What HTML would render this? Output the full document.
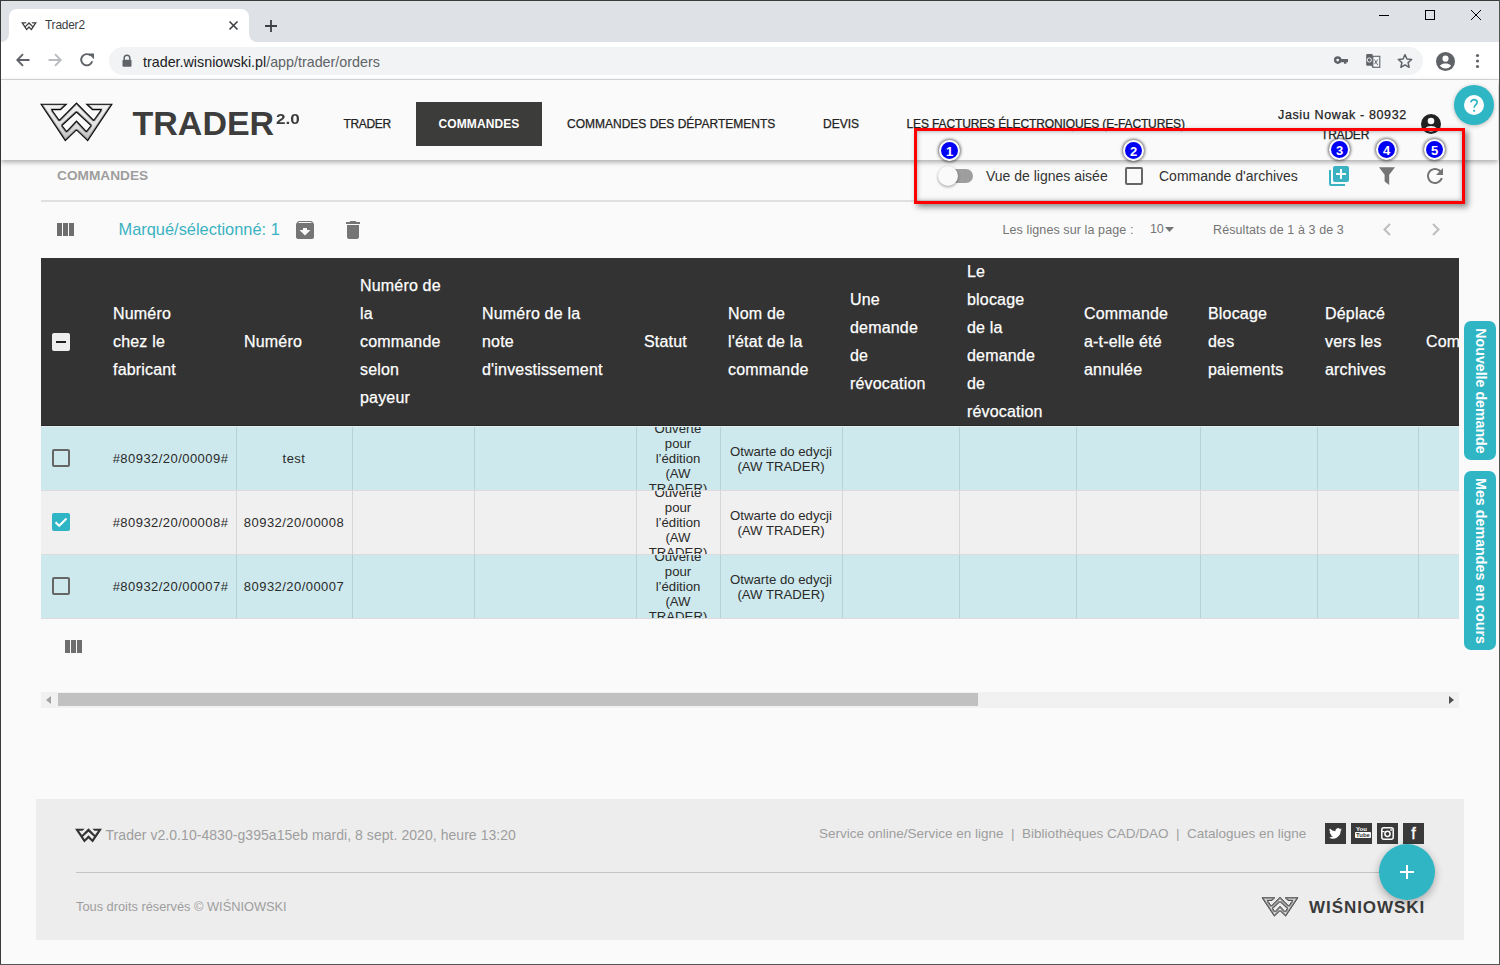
<!DOCTYPE html>
<html><head><meta charset="utf-8">
<style>
*{box-sizing:border-box}
html,body{margin:0;padding:0}
body{width:1500px;height:965px;position:relative;overflow:hidden;background:#fafafa;font-family:"Liberation Sans",sans-serif;color:#333}
.a{position:absolute;white-space:nowrap;line-height:1}
svg{position:absolute;overflow:visible}
.th{position:absolute;top:0;height:168px;display:flex;align-items:center;padding-left:8px;font-size:16px;line-height:28px;color:#fff;white-space:nowrap;letter-spacing:0.18px;-webkit-text-stroke:0.25px #fff}
.td{position:absolute;height:64px;display:flex;align-items:center;justify-content:center;text-align:center;font-size:13px;line-height:15px;color:#2a2a2a;overflow:hidden;white-space:nowrap;padding-top:1.5px;letter-spacing:0.45px}
</style></head><body>

<!-- ============ BROWSER CHROME ============ -->
<div class="a" style="left:0;top:0;width:1500px;height:42px;background:#dee1e6"></div>
<!-- active tab -->
<div class="a" style="left:9px;top:9px;width:240px;height:34px;background:#fff;border-radius:8px 8px 0 0"></div>
<svg style="left:1px;top:34px" width="8" height="8"><path d="M8 0 V8 H0 A8 8 0 0 0 8 0Z" fill="#fff"/></svg>
<svg style="left:249px;top:34px" width="8" height="8"><path d="M0 0 V8 H8 A8 8 0 0 1 0 0Z" fill="#fff"/></svg>
<!-- favicon -->
<svg style="left:21px;top:22px" width="16" height="8.5" viewBox="3 3 71 38"><path fill-rule="evenodd" fill="#3c3c3c" d="M3.1 4.2H28.3L22.6 9.6H13.5L21.3 20.5L38.5 3.1L55.7 20.5L63.5 9.6H54.4L48.7 4.2H73.9L49.7 40.6L38.5 29.9L27.3 40.6Z M23.9 25.5L38.5 12L53.1 25.5L48.4 31.7L38.5 21.1L28.6 31.7Z"/></svg>
<div id="tabt" class="a" style="left:45px;top:19.5px;font-size:11.9px;letter-spacing:-0.2px;color:#3c4043">Trader2</div>
<!-- tab close -->
<svg style="left:229px;top:21px" width="9" height="9"><path d="M0.5 0.5L8.5 8.5M8.5 0.5L0.5 8.5" stroke="#3c4043" stroke-width="1.6"/></svg>
<!-- new tab + -->
<svg style="left:265px;top:20px" width="12" height="12"><path d="M6 0V12M0 6H12" stroke="#3c4043" stroke-width="1.8"/></svg>
<!-- window controls -->
<div class="a" style="left:1379px;top:15px;width:10px;height:1px;background:#000"></div>
<div class="a" style="left:1425px;top:10px;width:10px;height:10px;border:1px solid #000"></div>
<svg style="left:1471px;top:10px" width="10" height="10"><path d="M0 0L10 10M10 0L0 10" stroke="#000" stroke-width="1"/></svg>

<!-- toolbar -->
<div class="a" style="left:0;top:42px;width:1500px;height:37px;background:#fff"></div>
<div class="a" style="left:0;top:79px;width:1500px;height:1px;background:#dadce0"></div>
<!-- nav icons -->
<svg style="left:16px;top:53px" width="14" height="14"><path d="M13.5 7H1.5M7 1.2L1.3 7L7 12.8" stroke="#5f6368" stroke-width="1.9" fill="none"/></svg>
<svg style="left:48px;top:53px" width="14" height="14"><path d="M0.5 7H12.5M7 1.2L12.7 7L7 12.8" stroke="#b9bbbe" stroke-width="1.9" fill="none"/></svg>
<svg style="left:80px;top:53px" width="14" height="14"><path d="M12.2 8.2A5.6 5.6 0 1 1 10.6 2.6" stroke="#5f6368" stroke-width="1.9" fill="none"/><path d="M8.3 0.6H14V6.3Z" fill="#5f6368"/></svg>
<!-- address pill -->
<div class="a" style="left:109px;top:47px;width:1314px;height:28px;background:#f1f3f4;border-radius:14px"></div>
<svg style="left:122px;top:54px" width="10" height="13"><path d="M2.2 6V4A2.8 2.8 0 0 1 7.8 4V6" stroke="#5f6368" stroke-width="1.5" fill="none"/><rect x="0.5" y="5.8" width="9" height="7" rx="1" fill="#5f6368"/></svg>
<div id="url" class="a" style="left:143px;top:55px;font-size:14.3px;color:#202124">trader.wisniowski.pl<span style="color:#5f6368">/app/trader/orders</span></div>
<!-- right omnibox icons -->
<svg style="left:1334px;top:56px" width="15" height="9"><circle cx="3.7" cy="4.1" r="2.6" fill="none" stroke="#5f6368" stroke-width="2.4"/><path d="M6 3H14V6.2H12.4V7.8H10V6.2H6Z" fill="#5f6368"/></svg>
<svg style="left:1366px;top:54px" width="15" height="14"><rect x="0.2" y="0" width="6.5" height="11.8" rx="1" fill="#5f6368"/><rect x="6.8" y="2.3" width="7" height="11" fill="none" stroke="#5f6368" stroke-width="1.1"/><path d="M6.8 11.5L5.2 11.8L6.8 13.6Z" fill="#5f6368"/><circle cx="3.3" cy="6" r="2.1" fill="none" stroke="#fff" stroke-width="0.9"/><path d="M8.2 5.5L11.8 11M11.8 5.5L8.6 10" stroke="#5f6368" stroke-width="0.9"/></svg>
<svg style="left:1397px;top:53px" width="16" height="16" viewBox="0 0 24 24"><path d="M12 2.5l2.9 6.6 7.1.6-5.4 4.7 1.6 7-6.2-3.7-6.2 3.7 1.6-7L2 9.7l7.1-.6z" fill="none" stroke="#5f6368" stroke-width="2.2" stroke-linejoin="round"/></svg>
<svg style="left:1436px;top:52px" width="19" height="19" viewBox="0 0 20 20"><circle cx="10" cy="10" r="10" fill="#5f6368"/><circle cx="10" cy="7" r="3.2" fill="#fff"/><path d="M4 14.6C5.5 12.6 8 12 10 12S14.5 12.6 16 14.6A7.8 7.8 0 0 1 4 14.6Z" fill="#fff"/></svg>
<svg style="left:1475px;top:53px" width="5" height="16"><circle cx="2.5" cy="2.5" r="1.6" fill="#5f6368"/><circle cx="2.5" cy="8" r="1.6" fill="#5f6368"/><circle cx="2.5" cy="13.5" r="1.6" fill="#5f6368"/></svg>


<!-- ============ APP HEADER ============ -->
<div class="a" style="left:1px;top:80px;width:1497px;height:80px;background:#fafafa;box-shadow:0 2px 5px rgba(0,0,0,.33);z-index:1"></div>
<div style="position:absolute;left:0;top:0;z-index:2">
<svg style="left:38px;top:100px" width="78" height="44" viewBox="0 0 78 44"><defs><filter id="er" x="-10%" y="-10%" width="120%" height="120%"><feMorphology operator="erode" radius="1.1"/><feGaussianBlur stdDeviation="0.7"/></filter><linearGradient id="mg" x1="0" y1="0" x2="0" y2="1"><stop offset="0" stop-color="#f6f6f6"/><stop offset=".6" stop-color="#e2e2e2"/><stop offset="1" stop-color="#bdbdbd"/></linearGradient></defs><path fill-rule="evenodd" fill="#8a8a8a" stroke="#0a0a0a" stroke-width="1.1" d="M3.1 4.2H28.3L22.6 9.6H13.5L21.3 20.5L38.5 3.1L55.7 20.5L63.5 9.6H54.4L48.7 4.2H73.9L49.7 40.6L38.5 29.9L27.3 40.6Z M23.9 25.5L38.5 12L53.1 25.5L48.4 31.7L38.5 21.1L28.6 31.7Z"/><path fill-rule="evenodd" fill="url(#mg)" filter="url(#er)" d="M3.1 4.2H28.3L22.6 9.6H13.5L21.3 20.5L38.5 3.1L55.7 20.5L63.5 9.6H54.4L48.7 4.2H73.9L49.7 40.6L38.5 29.9L27.3 40.6Z M23.9 25.5L38.5 12L53.1 25.5L48.4 31.7L38.5 21.1L28.6 31.7Z"/></svg>
<div id="logot" class="a" style="left:132.5px;top:105.5px;font-size:34px;font-weight:bold;color:#3d3d3d">TRADER</div>
<div id="logo2" class="a" style="left:276px;top:111.5px;font-size:14px;font-weight:bold;color:#3d3d3d;transform:scaleX(1.22);transform-origin:0 0">2.0</div>
<div id="nav1" class="a" style="-webkit-text-stroke:0.25px #222;left:343.5px;top:118px;font-size:12px;color:#222;letter-spacing:-0.35px">TRADER</div>
<div class="a" style="left:416px;top:102px;width:126px;height:44px;background:#3c3c3a"></div>
<div id="nav2" class="a" style="left:438.5px;top:118px;font-size:12px;color:#fff;font-weight:bold;letter-spacing:0.1px">COMMANDES</div>
<div id="nav3" class="a" style="-webkit-text-stroke:0.25px #222;left:567px;top:118px;font-size:12px;color:#222;letter-spacing:0px">COMMANDES DES DÉPARTEMENTS</div>
<div id="nav4" class="a" style="-webkit-text-stroke:0.25px #222;left:823px;top:118px;font-size:12px;color:#222;letter-spacing:0px">DEVIS</div>
<div id="nav5" class="a" style="-webkit-text-stroke:0.25px #222;left:906.5px;top:118px;font-size:12px;color:#222;letter-spacing:-0.13px">LES FACTURES ÉLECTRONIQUES (E-FACTURES)</div>
<div id="user1" class="a" style="-webkit-text-stroke:0.25px #222;left:1278px;top:109px;font-size:12.5px;color:#222;letter-spacing:0.64px">Jasiu Nowak - 80932</div>
<div id="user2" class="a" style="-webkit-text-stroke:0.25px #222;left:1321px;top:128.5px;font-size:12px;color:#222;letter-spacing:-0.2px">TRADER</div>
<svg style="left:1421px;top:114px" width="20" height="20" viewBox="0 0 20 20"><circle cx="10" cy="10" r="10" fill="#222"/><circle cx="10" cy="7" r="3.3" fill="#fafafa"/><path d="M3.8 14.8C5.3 12.7 7.8 12.1 10 12.1S14.7 12.7 16.2 14.8A8 8 0 0 1 3.8 14.8Z" fill="#fafafa"/></svg>
<div class="a" style="left:1454px;top:85px;width:40px;height:40px;border-radius:50%;background:#2eb6c5;box-shadow:0 1px 4px rgba(0,0,0,.25)"></div>
<div class="a" style="left:1464px;top:95px;width:20px;height:20px;border-radius:50%;background:#fff"></div>
<svg style="left:1464px;top:95px" width="20" height="20" viewBox="0 0 20 20"><path d="M6.9 7.3A3.2 3.2 0 0 1 13.2 7.2C13.2 9.4 10.2 9.8 10.2 12.8" stroke="#2eb6c5" stroke-width="1.7" fill="none"/><rect x="9.2" y="14.8" width="1.9" height="1.9" fill="#2eb6c5"/></svg>
</div>

<!-- ============ SUB HEADER ============ -->
<div id="subh" class="a" style="left:57px;top:169px;font-size:13.7px;font-weight:bold;color:#9e9e9e;letter-spacing:0px">COMMANDES</div>
<div class="a" style="left:41px;top:200px;width:1418px;height:2px;background:#e0e0e0"></div>
<!-- toggle -->
<div class="a" style="left:943px;top:169px;width:30px;height:14px;border-radius:7px;background:#9e9e9e"></div>
<div class="a" style="left:938px;top:166px;width:20px;height:20px;border-radius:50%;background:#fafafa;box-shadow:0 1px 3px rgba(0,0,0,.4)"></div>
<div id="vue" class="a" style="left:986px;top:169px;font-size:14px;color:#333">Vue de lignes aisée</div>
<div class="a" style="left:1125px;top:167px;width:18px;height:18px;border:2px solid #666;border-radius:2px"></div>
<div id="arch" class="a" style="left:1159px;top:169px;font-size:14px;color:#333">Commande d'archives</div>


<!-- toolbar icons -->
<svg style="left:1327px;top:164px" width="24" height="24" viewBox="0 0 24 24"><path fill="#3ab2c2" d="M4 6H2v14c0 1.1.9 2 2 2h14v-2H4V6zm16-4H8c-1.1 0-2 .9-2 2v12c0 1.1.9 2 2 2h12c1.1 0 2-.9 2-2V4c0-1.1-.9-2-2-2zm-1 9h-4v4h-2v-4H9V9h4V5h2v4h4v2z"/></svg>
<svg style="left:1379px;top:167px" width="16" height="18" viewBox="0 0 16 18"><path fill="#757575" d="M0 0.2H16L10.2 7.8V18L5.6 14.5V7.8Z"/></svg>
<svg style="left:1423px;top:164px" width="24" height="24" viewBox="0 0 24 24"><path fill="#757575" d="M17.65 6.35C16.2 4.9 14.21 4 12 4c-4.42 0-7.99 3.58-7.99 8s3.57 8 7.99 8c3.73 0 6.84-2.55 7.73-6h-2.08c-.82 2.33-3.04 4-5.650 4-3.31 0-6-2.690-6-6s2.69-6 6-6c1.66 0 3.14.69 4.22 1.78L13 11h7V4l-2.35 2.35z"/></svg>

<!-- ============ ANNOTATIONS ============ -->
<div class="a" style="left:914px;top:127.5px;width:551px;height:76px;border:3px solid #f00;box-shadow:3px 3px 6px rgba(0,0,0,.45), inset 0 0 5px rgba(0,0,0,.35);z-index:5"></div>
<div class="a" style="left:939.0px;top:139.5px;width:21px;height:21px;border-radius:50%;background:#0000f5;border:2.2px solid #fff;box-shadow:0 0 3px 1px rgba(0,0,0,.55);z-index:6"></div>
<div class="a" style="left:939.0px;top:144.5px;width:21px;text-align:center;font-weight:bold;font-size:13px;color:#fff;z-index:7">1</div>
<div class="a" style="left:1123.0px;top:139.5px;width:21px;height:21px;border-radius:50%;background:#0000f5;border:2.2px solid #fff;box-shadow:0 0 3px 1px rgba(0,0,0,.55);z-index:6"></div>
<div class="a" style="left:1123.0px;top:144.5px;width:21px;text-align:center;font-weight:bold;font-size:13px;color:#fff;z-index:7">2</div>
<div class="a" style="left:1329.0px;top:138.5px;width:21px;height:21px;border-radius:50%;background:#0000f5;border:2.2px solid #fff;box-shadow:0 0 3px 1px rgba(0,0,0,.55);z-index:6"></div>
<div class="a" style="left:1329.0px;top:143.5px;width:21px;text-align:center;font-weight:bold;font-size:13px;color:#fff;z-index:7">3</div>
<div class="a" style="left:1376.0px;top:138.5px;width:21px;height:21px;border-radius:50%;background:#0000f5;border:2.2px solid #fff;box-shadow:0 0 3px 1px rgba(0,0,0,.55);z-index:6"></div>
<div class="a" style="left:1376.0px;top:143.5px;width:21px;text-align:center;font-weight:bold;font-size:13px;color:#fff;z-index:7">4</div>
<div class="a" style="left:1424.0px;top:138.5px;width:21px;height:21px;border-radius:50%;background:#0000f5;border:2.2px solid #fff;box-shadow:0 0 3px 1px rgba(0,0,0,.55);z-index:6"></div>
<div class="a" style="left:1424.0px;top:143.5px;width:21px;text-align:center;font-weight:bold;font-size:13px;color:#fff;z-index:7">5</div>

<!-- ============ SELECTION BAR ============ -->
<svg style="left:53px;top:218px" width="24" height="24" viewBox="0 0 24 24"><path fill="#6e6e6e" d="M10 18h5V5h-5v13zm-6 0h5V5H4v13zM16 5v13h5V5h-5z"/></svg>
<div id="marq" class="a" style="left:118.5px;top:221px;font-size:16.4px;color:#3ab2c2">Marqué/sélectionné: 1</div>
<svg style="left:293px;top:218px" width="24" height="24" viewBox="0 0 24 24"><path fill="#757575" d="M20.54 5.23l-1.39-1.68C18.88 3.21 18.47 3 18 3H6c-.47 0-.88.21-1.16.55L3.460 5.23C3.17 5.57 3 6.02 3 6.5V19c0 1.1.9 2 2 2h14c1.1 0 2-.9 2-2V6.5c0-.48-.17-.93-.46-1.27zM12 17.5L6.5 12H10v-2h4v2h3.5L12 17.5zM5.12 5l.81-1h12l.94 1H5.12z"/></svg>
<svg style="left:341px;top:218px" width="24" height="24" viewBox="0 0 24 24"><path fill="#757575" d="M6 19c0 1.1.9 2 2 2h8c1.1 0 2-.9 2-2V7H6v12zM19 4h-3.5l-1-1h-5l-1 1H5v2h14V4z"/></svg>
<div id="lignes" class="a" style="left:1002.5px;top:224px;font-size:12.5px;color:#757575;letter-spacing:0.1px">Les lignes sur la page :</div>
<div id="dix" class="a" style="left:1150px;top:223px;font-size:12.5px;color:#757575;letter-spacing:-0.3px">10</div>
<svg style="left:1165px;top:227px" width="9" height="5"><path d="M0 0H9L4.5 5Z" fill="#757575"/></svg>
<div id="result" class="a" style="left:1213px;top:224px;font-size:12.5px;color:#757575;letter-spacing:0.1px">Résultats de 1 à 3 de 3</div>
<svg style="left:1383px;top:223px" width="8" height="13"><path d="M7 1L1.5 6.5L7 12" stroke="#bdbdbd" stroke-width="2" fill="none"/></svg>
<svg style="left:1432px;top:223px" width="8" height="13"><path d="M1 1L6.5 6.5L1 12" stroke="#bdbdbd" stroke-width="2" fill="none"/></svg>

<!-- ============ TABLE ============ -->
<div style="position:absolute;left:41px;top:258px;width:1418px;height:361px;overflow:hidden">
<div class="a" style="left:0;top:0;width:1418px;height:168px;background:#333"></div>
<div class="a" style="left:11px;top:75px;width:18px;height:18px;background:#eee;border-radius:2px"></div><div class="a" style="left:15px;top:83px;width:10px;height:2px;background:#222"></div>
<div class="th" style="left:64px;width:131px">Numéro<br>chez le<br>fabricant</div>
<div class="th" style="left:195px;width:116px">Numéro</div>
<div class="th" style="left:311px;width:122px">Numéro de<br>la<br>commande<br>selon<br>payeur</div>
<div class="th" style="left:433px;width:162px">Numéro de la<br>note<br>d'investissement</div>
<div class="th" style="left:595px;width:84px">Statut</div>
<div class="th" style="left:679px;width:122px">Nom de<br>l'état de la<br>commande</div>
<div class="th" style="left:801px;width:117px">Une<br>demande<br>de<br>révocation</div>
<div class="th" style="left:918px;width:117px">Le<br>blocage<br>de la<br>demande<br>de<br>révocation</div>
<div class="th" style="left:1035px;width:124px">Commande<br>a-t-elle été<br>annulée</div>
<div class="th" style="left:1159px;width:117px">Blocage<br>des<br>paiements</div>
<div class="th" style="left:1276px;width:101px">Déplacé<br>vers les<br>archives</div>
<div class="th" style="left:1377px;width:142px">Commentaire</div>
<div class="a" style="left:0;top:168px;width:1418px;height:64px;background:#cde9ed"></div>
<div class="a" style="left:11px;top:191px;width:18px;height:18px;border:2px solid #666;border-radius:2px"></div>
<div id="num1" class="td" style="left:64px;top:168px;width:131px">#80932/20/00009#</div>
<div class="a" style="left:195px;top:168px;width:1px;height:64px;background:rgba(0,0,0,.1)"></div>
<div class="td" style="left:195px;top:168px;width:116px">test</div>
<div class="a" style="left:311px;top:168px;width:1px;height:64px;background:rgba(0,0,0,.1)"></div>
<div class="a" style="left:433px;top:168px;width:1px;height:64px;background:rgba(0,0,0,.1)"></div>
<div class="a" style="left:595px;top:168px;width:1px;height:64px;background:rgba(0,0,0,.1)"></div>
<div class="td" style="left:595px;top:168px;width:84px;font-size:13.2px;padding-top:1px;letter-spacing:0">Ouverte<br>pour<br>l’édition<br>(AW<br>TRADER)</div>
<div class="a" style="left:679px;top:168px;width:1px;height:64px;background:rgba(0,0,0,.1)"></div>
<div id="otw" class="td" style="left:679px;top:168px;width:122px;font-size:13.2px;padding-top:1px;letter-spacing:0">Otwarte do edycji<br>(AW TRADER)</div>
<div class="a" style="left:801px;top:168px;width:1px;height:64px;background:rgba(0,0,0,.1)"></div>
<div class="a" style="left:918px;top:168px;width:1px;height:64px;background:rgba(0,0,0,.1)"></div>
<div class="a" style="left:1035px;top:168px;width:1px;height:64px;background:rgba(0,0,0,.1)"></div>
<div class="a" style="left:1159px;top:168px;width:1px;height:64px;background:rgba(0,0,0,.1)"></div>
<div class="a" style="left:1276px;top:168px;width:1px;height:64px;background:rgba(0,0,0,.1)"></div>
<div class="a" style="left:1377px;top:168px;width:1px;height:64px;background:rgba(0,0,0,.1)"></div>
<div class="a" style="left:0;top:232px;width:1418px;height:64px;background:#f0f0f0"></div>
<svg style="left:11px;top:255px" width="18" height="18" viewBox="0 0 18 18"><rect width="18" height="18" rx="2" fill="#2fb5c4"/><path d="M3.5 9.2L7.2 12.8L14.5 5.5" stroke="#fff" stroke-width="2" fill="none"/></svg>
<div class="td" style="left:64px;top:232px;width:131px">#80932/20/00008#</div>
<div class="a" style="left:195px;top:232px;width:1px;height:64px;background:rgba(0,0,0,.1)"></div>
<div class="td" style="left:195px;top:232px;width:116px">80932/20/00008</div>
<div class="a" style="left:311px;top:232px;width:1px;height:64px;background:rgba(0,0,0,.1)"></div>
<div class="a" style="left:433px;top:232px;width:1px;height:64px;background:rgba(0,0,0,.1)"></div>
<div class="a" style="left:595px;top:232px;width:1px;height:64px;background:rgba(0,0,0,.1)"></div>
<div class="td" style="left:595px;top:232px;width:84px;font-size:13.2px;padding-top:1px;letter-spacing:0">Ouverte<br>pour<br>l’édition<br>(AW<br>TRADER)</div>
<div class="a" style="left:679px;top:232px;width:1px;height:64px;background:rgba(0,0,0,.1)"></div>
<div class="td" style="left:679px;top:232px;width:122px;font-size:13.2px;padding-top:1px;letter-spacing:0">Otwarte do edycji<br>(AW TRADER)</div>
<div class="a" style="left:801px;top:232px;width:1px;height:64px;background:rgba(0,0,0,.1)"></div>
<div class="a" style="left:918px;top:232px;width:1px;height:64px;background:rgba(0,0,0,.1)"></div>
<div class="a" style="left:1035px;top:232px;width:1px;height:64px;background:rgba(0,0,0,.1)"></div>
<div class="a" style="left:1159px;top:232px;width:1px;height:64px;background:rgba(0,0,0,.1)"></div>
<div class="a" style="left:1276px;top:232px;width:1px;height:64px;background:rgba(0,0,0,.1)"></div>
<div class="a" style="left:1377px;top:232px;width:1px;height:64px;background:rgba(0,0,0,.1)"></div>
<div class="a" style="left:0;top:296px;width:1418px;height:64px;background:#cde9ed"></div>
<div class="a" style="left:11px;top:319px;width:18px;height:18px;border:2px solid #666;border-radius:2px"></div>
<div class="td" style="left:64px;top:296px;width:131px">#80932/20/00007#</div>
<div class="a" style="left:195px;top:296px;width:1px;height:64px;background:rgba(0,0,0,.1)"></div>
<div id="num2" class="td" style="left:195px;top:296px;width:116px">80932/20/00007</div>
<div class="a" style="left:311px;top:296px;width:1px;height:64px;background:rgba(0,0,0,.1)"></div>
<div class="a" style="left:433px;top:296px;width:1px;height:64px;background:rgba(0,0,0,.1)"></div>
<div class="a" style="left:595px;top:296px;width:1px;height:64px;background:rgba(0,0,0,.1)"></div>
<div class="td" style="left:595px;top:296px;width:84px;font-size:13.2px;padding-top:1px;letter-spacing:0">Ouverte<br>pour<br>l’édition<br>(AW<br>TRADER)</div>
<div class="a" style="left:679px;top:296px;width:1px;height:64px;background:rgba(0,0,0,.1)"></div>
<div class="td" style="left:679px;top:296px;width:122px;font-size:13.2px;padding-top:1px;letter-spacing:0">Otwarte do edycji<br>(AW TRADER)</div>
<div class="a" style="left:801px;top:296px;width:1px;height:64px;background:rgba(0,0,0,.1)"></div>
<div class="a" style="left:918px;top:296px;width:1px;height:64px;background:rgba(0,0,0,.1)"></div>
<div class="a" style="left:1035px;top:296px;width:1px;height:64px;background:rgba(0,0,0,.1)"></div>
<div class="a" style="left:1159px;top:296px;width:1px;height:64px;background:rgba(0,0,0,.1)"></div>
<div class="a" style="left:1276px;top:296px;width:1px;height:64px;background:rgba(0,0,0,.1)"></div>
<div class="a" style="left:1377px;top:296px;width:1px;height:64px;background:rgba(0,0,0,.1)"></div>
<div class="a" style="left:0;top:232px;width:1418px;height:1px;background:#dcdcdc"></div>
<div class="a" style="left:0;top:296px;width:1418px;height:1px;background:#dcdcdc"></div>
<div class="a" style="left:0;top:360px;width:1418px;height:1px;background:#dcdcdc"></div>
<div class="a" style="left:0;top:167px;width:1418px;height:1px;background:#282828"></div>
<div class="a" style="left:0;top:168px;width:1418px;height:1px;background:#e4eded"></div>
</div>

<svg style="left:61px;top:635px" width="24" height="24" viewBox="0 0 24 24"><path fill="#6e6e6e" d="M10 18h5V5h-5v13zm-6 0h5V5H4v13zM16 5v13h5V5h-5z"/></svg>
<!-- scrollbar -->
<div class="a" style="left:41px;top:692px;width:1418px;height:16px;background:#f1f1f1"></div>
<div class="a" style="left:58px;top:693px;width:920px;height:13px;background:#c1c1c1"></div>
<svg style="left:46px;top:696px" width="6" height="8"><path d="M5 0V8L0 4Z" fill="#a3a3a3"/></svg>
<svg style="left:1449px;top:696px" width="6" height="8"><path d="M0 0V8L5 4Z" fill="#505050"/></svg>

<!-- side tabs -->
<div class="a" style="left:1464px;top:321px;width:32px;height:139px;background:#2fb5c4;border-radius:7px"></div>
<div id="tab1" class="a" style="left:1481px;top:390.5px;font-size:14.2px;font-weight:bold;color:#fff;transform:translate(-50%,-50%) rotate(90deg)">Nouvelle demande</div>
<div class="a" style="left:1464px;top:471px;width:32px;height:179px;background:#2fb5c4;border-radius:7px"></div>
<div id="tab2" class="a" style="left:1481px;top:560.5px;font-size:14.3px;font-weight:bold;color:#fff;transform:translate(-50%,-50%) rotate(90deg)">Mes demandes en cours</div>

<!-- ============ FOOTER ============ -->
<div class="a" style="left:36px;top:799px;width:1428px;height:141px;background:#ededed"></div>
<svg style="left:75px;top:828px" width="27" height="15" viewBox="3 3 71 38"><path fill-rule="evenodd" fill="#333" d="M3.1 4.2H28.3L22.6 9.6H13.5L21.3 20.5L38.5 3.1L55.7 20.5L63.5 9.6H54.4L48.7 4.2H73.9L49.7 40.6L38.5 29.9L27.3 40.6Z M23.9 25.5L38.5 12L53.1 25.5L48.4 31.7L38.5 21.1L28.6 31.7Z"/></svg>
<div id="ver" class="a" style="left:105.5px;top:828px;font-size:14px;color:#9e9e9e;letter-spacing:0.05px">Trader v2.0.10-4830-g395a15eb mardi, 8 sept. 2020, heure 13:20</div>
<div id="links" class="a" style="left:819px;top:827px;font-size:13.5px;color:#9e9e9e">Service online/Service en ligne&nbsp;&nbsp;|&nbsp;&nbsp;Bibliothèques CAD/DAO&nbsp;&nbsp;|&nbsp;&nbsp;Catalogues en ligne</div>
<div class="a" style="left:1325px;top:823px;width:21px;height:21px;background:#3a3a3a"></div>
<div class="a" style="left:1351px;top:823px;width:21px;height:21px;background:#3a3a3a"></div>
<div class="a" style="left:1377px;top:823px;width:21px;height:21px;background:#3a3a3a"></div>
<div class="a" style="left:1403px;top:823px;width:21px;height:21px;background:#3a3a3a"></div>
<svg style="left:1329px;top:828px" width="13" height="11" viewBox="0 0 24 20"><path d="M24 2.4a9.8 9.8 0 0 1-2.8.8A4.9 4.9 0 0 0 23.3.4a9.9 9.9 0 0 1-3.1 1.2A4.9 4.9 0 0 0 11.8 6 14 14 0 0 1 1.7.9a4.9 4.9 0 0 0 1.5 6.6A4.9 4.9 0 0 1 1 6.9a4.9 4.9 0 0 0 3.9 4.9 4.9 4.9 0 0 1-2.2.1 4.9 4.9 0 0 0 4.6 3.4A9.9 9.9 0 0 1 0 17.3 14 14 0 0 0 7.5 19.5c9.1 0 14-7.5 14-14v-.6A10 10 0 0 0 24 2.4z" fill="#fff"/></svg>
<div class="a" style="left:1355px;top:826px;width:13px;text-align:center;font-size:6px;font-weight:bold;color:#fff;line-height:6px">You<br><span style="background:#fff;color:#3a3a3a;border-radius:1px;padding:0 1px">Tube</span></div>
<svg style="left:1381px;top:827px" width="13" height="13" viewBox="0 0 13 13"><rect x="0.8" y="0.8" width="11.4" height="11.4" rx="2" fill="none" stroke="#fff" stroke-width="1.5"/><circle cx="6.5" cy="6.8" r="2.6" fill="none" stroke="#fff" stroke-width="1.5"/><rect x="1" y="4" width="2.5" height="1.2" fill="#fff"/><rect x="9.3" y="2.2" width="1.6" height="1.6" fill="#fff"/></svg>
<div class="a" style="left:1403px;top:826px;width:21px;text-align:center;font-size:16px;color:#fff;-webkit-text-stroke:0.4px #fff">f</div>
<div class="a" style="left:76px;top:872px;width:1348px;height:1px;background:#c4c4c4"></div>
<div id="copy" class="a" style="left:76px;top:900.5px;font-size:12.8px;color:#9e9e9e">Tous droits réservés © WIŚNIOWSKI</div>
<svg style="left:1262px;top:896.5px" width="36" height="19.5" viewBox="3 3 71 38"><defs><filter id="er2" x="-10%" y="-10%" width="120%" height="120%"><feMorphology operator="erode" radius="2.1"/><feGaussianBlur stdDeviation="0.8"/></filter></defs><path fill-rule="evenodd" fill="#8c8c8c" stroke="#2a2a2a" stroke-width="1.5" d="M3.1 4.2H28.3L22.6 9.6H13.5L21.3 20.5L38.5 3.1L55.7 20.5L63.5 9.6H54.4L48.7 4.2H73.9L49.7 40.6L38.5 29.9L27.3 40.6Z M23.9 25.5L38.5 12L53.1 25.5L48.4 31.7L38.5 21.1L28.6 31.7Z"/><path fill-rule="evenodd" fill="#e6e6e6" filter="url(#er2)" d="M3.1 4.2H28.3L22.6 9.6H13.5L21.3 20.5L38.5 3.1L55.7 20.5L63.5 9.6H54.4L48.7 4.2H73.9L49.7 40.6L38.5 29.9L27.3 40.6Z M23.9 25.5L38.5 12L53.1 25.5L48.4 31.7L38.5 21.1L28.6 31.7Z"/></svg>
<div id="wis" class="a" style="left:1309px;top:899px;font-size:17px;font-weight:bold;color:#3a3a3a;letter-spacing:0.95px">WIŚNIOWSKI</div>
<!-- FAB -->
<div class="a" style="left:1379px;top:844px;width:56px;height:56px;border-radius:50%;background:#2fb5c4;box-shadow:0 3px 8px rgba(0,0,0,.3)"></div>
<div class="a" style="left:1400px;top:871px;width:14px;height:2px;background:#fff"></div>
<div class="a" style="left:1406px;top:865px;width:2px;height:14px;background:#fff"></div>

<!-- window border -->
<div class="a" style="left:0;top:0;width:1500px;height:1px;background:#3a3a3a"></div>
<div class="a" style="left:0;top:0;width:1px;height:965px;background:#3a3a3a"></div>
<div class="a" style="left:1499px;top:0;width:1px;height:965px;background:#555"></div>
<div class="a" style="left:0;top:964px;width:1500px;height:1px;background:#555"></div>

</body></html>
